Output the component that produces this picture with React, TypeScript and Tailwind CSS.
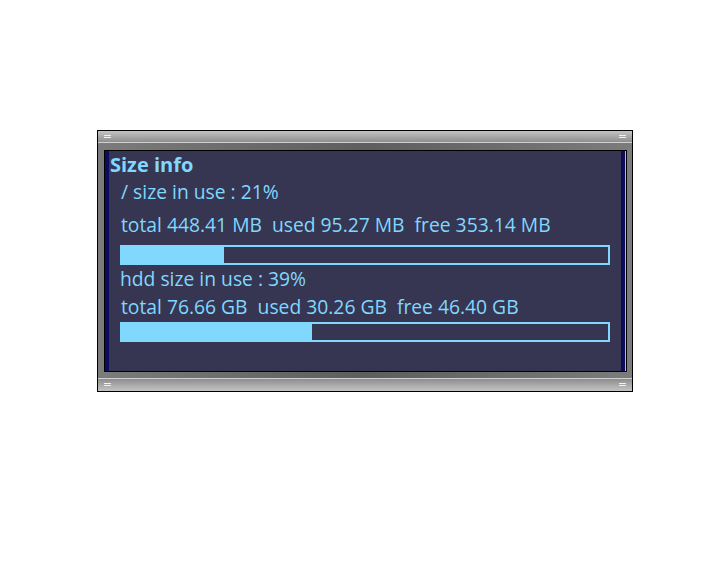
import React from 'react'

const disks = [
  { label: '/ size in use : 21%', line: 'total 448.41 MB  used 95.27 MB  free 353.14 MB', pct: 21 },
  { label: 'hdd size in use : 39%', line: 'total 76.66 GB  used 30.26 GB  free 46.40 GB', pct: 39 },
]

function Grip() {
  return (
    <div className="flex flex-col gap-[1px] w-[7px]">
      <div className="h-[1px] bg-[#f0f0f0]" />
      <div className="h-[1px] bg-[#f0f0f0]" />
    </div>
  )
}

export default function App() {
  return (
    <div className="w-[720px] h-[576px] bg-white pt-[130px] pl-[97px]" style={{ fontFamily: '"Open Sans", sans-serif' }}>
      <div className="w-[536px] h-[262px] border border-black flex flex-col">
        {/* top bar */}
        <div className="h-[12px] flex items-start justify-between pl-[6px] pr-[6px] pt-[4px] bg-gradient-to-b from-[#c4c4c4] to-[#8e8e8e] border-b border-[#d0d0d0]">
          <Grip />
          <Grip />
        </div>

        {/* middle */}
        <div className="h-[235px] flex bg-gradient-to-r from-[#7c7c7c] via-[#5e5e5e] to-[#7c7c7c] pl-[6px] pr-[5px] pt-[7px] pb-[6px]">
          <div className="flex-1 flex border border-black">
            <div className="w-[4px] bg-[#0d0b5c]" />
            <div className="flex-1 bg-[#363552] text-[#80d8ff] text-[19.3px] whitespace-pre">
              <div className="h-[24px] leading-[24px] mt-[2px] pl-[1px] font-bold text-[20px]">Size info</div>
              <div className="pl-[11px] pr-[11px]">
                <div className="h-[24px] leading-[24px] mt-[3px] pl-[1px]">{disks[0].label}</div>
                <div className="h-[24px] leading-[24px] mt-[9px] pl-[1px]">{disks[0].line}</div>
                <div className="h-[20px] mt-[8px] border-2 border-[#80d8ff]">
                  <div className="h-full bg-[#80d8ff]" style={{ width: `${disks[0].pct}%` }} />
                </div>
                <div className="h-[24px] leading-[24px] mt-[2px]">{disks[1].label}</div>
                <div className="h-[24px] leading-[24px] mt-[4px] pl-[1px]">{disks[1].line}</div>
                <div className="h-[20px] mt-[3px] border-2 border-[#80d8ff]">
                  <div className="h-full bg-[#80d8ff]" style={{ width: `${disks[1].pct}%` }} />
                </div>
              </div>
            </div>
            <div className="w-[4px] bg-[#0d0b5c]" />
            <div className="w-[1px] bg-[#bcbcbc]" />
          </div>
        </div>

        {/* bottom bar */}
        <div className="h-[13px] flex items-start justify-between pl-[6px] pr-[6px] pt-[4px] bg-gradient-to-b from-[#8e8e8e] to-[#c4c4c4] border-t border-[#d0d0d0]">
          <Grip />
          <Grip />
        </div>
      </div>
    </div>
  )
}
